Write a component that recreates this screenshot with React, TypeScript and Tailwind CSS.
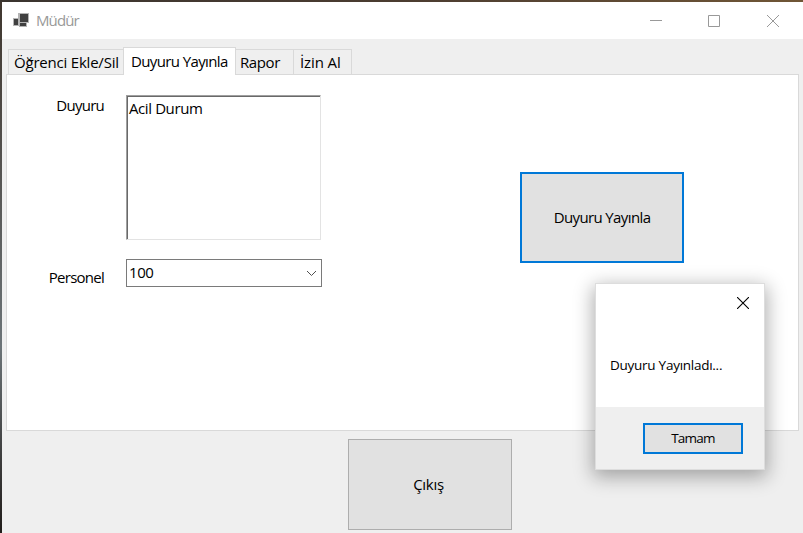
import React from "react";

function TitleBar() {
  return (
    <header className="flex h-[37px] shrink-0 items-center bg-white pl-[11px] text-[#999999]">
      <svg width="16" height="15" viewBox="0 0 16 15" className="shrink-0" shapeRendering="crispEdges">
        <path d="M5 0h11v10H5z" fill="#b4b4b4" />
        <path d="M0 5h6v8H0z" fill="#b4b4b4" />
        <path d="M6 9h8v5H6z" fill="#b4b4b4" />
        <path d="M7 1h8v8H7z" fill="#404040" />
        <path d="M1 6h4v6H1z" fill="#404040" />
        <path d="M7 10h6v3H7z" fill="#404040" />
      </svg>
      <span className="ml-[7px] pb-px text-[15px] leading-5 tracking-[-0.9px]">Müdür</span>
      <svg width="130" height="14" viewBox="0 0 130 14" className="mr-[23px] ml-auto" fill="none" stroke="#999999">
        <path d="M0 6.5h12M58.5 1.5h11v11h-11zM117 1l12 12M129 1l-12 12" />
      </svg>
    </header>
  );
}

function Tabs() {
  return (
    <nav className="relative z-10 -mb-px flex h-[28px] items-end pl-[6px]">
      <button className="h-[26px] w-[115px] border border-r-0 border-[#d9d9d9] pl-[5px] text-left tracking-[-0.21px]">Öğrenci Ekle/Sil</button>
      <button className="h-[28px] w-[113px] border border-b-0 border-[#d9d9d9] bg-white pb-px pl-[7px] text-left tracking-[-0.62px]">Duyuru Yayınla</button>
      <button className="h-[26px] w-[57px] border-y border-[#d9d9d9] pl-1 text-left tracking-[-0.4px]">Rapor</button>
      <button className="h-[26px] w-[59px] border border-[#d9d9d9] pl-[6px] text-left tracking-[-0.1px]">İzin Al</button>
    </nav>
  );
}

function MessageBox() {
  return (
    <section className="absolute top-[283px] left-[595px] flex h-[187px] w-[170px] flex-col border border-[#dddddd] bg-white shadow-[0_5px_18px_2px_rgba(0,0,0,0.32)]">
      <div className="flex justify-end pt-[13px] pr-[15px]">
        <svg width="12" height="12" viewBox="0 0 12 12" stroke="#000" strokeWidth="1.1">
          <path d="M0 0l12 12M12 0L0 12" />
        </svg>
      </div>
      <p className="mt-[46px] ml-[14px] text-[13.5px] leading-5 tracking-[-0.26px]">Duyuru Yayınladı...</p>
      <div className="mt-auto flex h-[62px] items-center justify-end bg-[#efefef] pr-[21px]">
        <button className="h-[31px] w-[100px] border-2 border-[#0078d7] bg-[#e1e1e1] text-[13.5px] tracking-[-0.75px]">Tamam</button>
      </div>
    </section>
  );
}

export default function App() {
  return (
    <div className="flex h-[533px] w-[803px] flex-col overflow-hidden bg-[#efefef] font-['Open_Sans','Noto_Sans',sans-serif] text-[15px] leading-5 text-black">
      <div className="h-[2px] shrink-0 bg-linear-to-r from-[#3a342f] via-[#4b3c30] to-[#705636]" />
      <div className="flex min-h-0 flex-1">
        <div className="w-[2px] shrink-0 bg-linear-to-b from-[#40372f] via-[#6c7478] via-65% to-[#211d1b]" />
        <div className="flex min-w-0 flex-1 flex-col">
          <TitleBar />
          <div className="pt-2">
            <Tabs />
            <main className="ml-1 flex h-[357px] w-[793px] border border-[#d9d9d9] bg-white">
              <form className="flex w-[314px] flex-col pt-5">
                <div className="flex justify-end">
                  <label className="mr-[22px] tracking-[-0.75px]">Duyuru</label>
                  <div className="h-[145px] w-[195px] border border-[#e3e3e3] border-t-[#a0a0a0] border-l-[#a0a0a0]">
                    <div className="h-full w-full border-t border-l border-[#696969] pt-px pl-px tracking-[-0.4px]">Acil Durum</div>
                  </div>
                </div>
                <div className="mt-[19px] -mr-px flex justify-end">
                  <label className="mt-2 mr-[22px] tracking-[-0.75px]">Personel</label>
                  <div className="flex h-[28px] w-[196px] items-center justify-between border border-[#7a7a7a] pr-1 pl-[2px] tracking-[-0.4px]">
                    <span className="pb-[2px]">100</span>
                    <svg width="11" height="7" viewBox="0 0 11 7" fill="none" stroke="#505050">
                      <path d="M1 1l4.5 4.5L10 1" />
                    </svg>
                  </div>
                </div>
              </form>
              <button className="mt-[97px] ml-[199px] h-[91px] w-[164px] border-2 border-[#0078d7] bg-[#e1e1e1] pb-[2px] tracking-[-0.62px]">Duyuru Yayınla</button>
            </main>
            <button className="mt-2 ml-[346px] h-[91px] w-[164px] border border-[#adadad] bg-[#e1e1e1] pr-[3px] pb-[2px] tracking-[-0.3px]">Çıkış</button>
          </div>
        </div>
      </div>
      <MessageBox />
    </div>
  );
}
